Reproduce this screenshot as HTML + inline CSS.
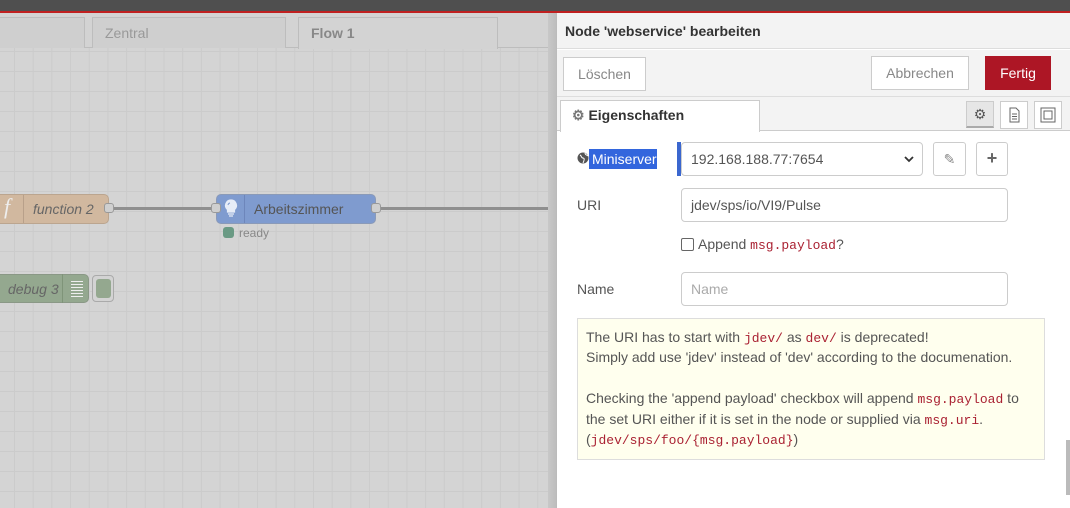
<!DOCTYPE html>
<html><head><meta charset="utf-8"><style>
*{box-sizing:border-box;margin:0;padding:0}
body{width:1070px;height:508px;overflow:hidden;position:relative;font-family:"Liberation Sans",sans-serif;font-size:14px;color:#555;background:#d3d3d3}
.a{position:absolute}
.top{left:0;top:0;width:1070px;height:11px;background:#4f4f4f}
.red{left:0;top:11px;width:1070px;height:2px;background:#c02020}
.canvas{left:0;top:48px;width:548px;height:460px;background-color:#d4d4d4;background-image:linear-gradient(#cbcbcb 1px,transparent 1px),linear-gradient(90deg,#cbcbcb 1px,transparent 1px);background-size:18.7px 20px;background-position:14px 3px}
.tabbar{left:0;top:13px;width:548px;height:35px;background:#d3d3d3;border-bottom:1px solid #bdbdbd}
.tab{top:17px;height:31px;border:1px solid #bdbdbd;border-bottom:none;background:#cfcfcf;font-size:14px;color:#999;padding:7px 12px}
.node{height:30px;border:1px solid #aaa;border-radius:5px}
.port{width:10px;height:10px;border:1px solid #999;background:#cfcfcf;border-radius:3px}
.wire{height:3px;background:#8f8f8f}
.panel{left:556px;top:13px;width:514px;height:495px;background:#fff;border-left:1px solid #bbb}
.shadow{left:548px;top:13px;width:8px;height:495px;background:linear-gradient(90deg,#c8c8c8,#bdbdbd)}
.btn{border:1px solid #ccc;background:#fff;color:#888;font-size:14px;text-align:center}
.inp{border:1px solid #ccc;border-radius:4px;background:#fff;font-size:14px;padding:0 9px;color:#555}
code{font-family:"Liberation Mono",monospace;color:#aa2233;font-size:13px;line-height:1}
</style></head><body>
<div class="a top"></div><div class="a red"></div>
<div class="a tabbar"></div>
<div class="a canvas"></div>
<div class="a tab" style="left:-5px;width:90px"></div>
<div class="a tab" style="left:92px;width:194px">Zentral</div>
<div class="a tab" style="left:298px;width:200px;background:#d3d3d3;color:#888;font-weight:bold;height:32px">Flow 1</div>
<div class="a wire" style="left:112px;top:207px;width:104px"></div>
<div class="a wire" style="left:380px;top:207px;width:168px"></div>
<!-- function node -->
<div class="a node" style="left:-10px;top:194px;width:119px;background:#d1b89f;border-color:#bba58f"></div>
<div class="a" style="left:23px;top:195px;width:1px;height:28px;background:#b8a08a"></div>
<div class="a" style="left:4px;top:194px;font-family:'Liberation Serif',serif;font-style:italic;font-size:22px;color:#eee">f</div>
<div class="a" style="left:33px;top:201px;font-style:italic;color:#666">function 2</div>
<div class="a port" style="left:104px;top:203px"></div>
<!-- Arbeitszimmer -->
<div class="a" style="left:216px;top:194px;width:160px;height:30px;border-radius:5px;background:#7f9bcf;border:1px solid #8a9ab8"></div>
<div class="a" style="left:244px;top:195px;width:1px;height:28px;background:#6d86bb"></div>
<svg class="a" style="left:222px;top:198px" width="18" height="22"><path d="M9 2a5.5 5.5 0 0 0-3.5 9.7V14h7v-2.3A5.5 5.5 0 0 0 9 2z M6 16h6 M7 18h4" fill="#e6ecf7" stroke="#e6ecf7" stroke-width="1.2"/><path d="M8 5a2.5 2.5 0 0 0-2 2" stroke="#7f9bcf" fill="none"/></svg>
<div class="a" style="left:254px;top:201px;color:#555">Arbeitszimmer</div>
<div class="a port" style="left:211px;top:203px"></div>
<div class="a port" style="left:371px;top:203px"></div>
<div class="a" style="left:223px;top:227px;width:11px;height:11px;border-radius:3px;background:#6a9a84"></div>
<div class="a" style="left:239px;top:226px;font-size:12px;color:#888">ready</div>
<!-- debug -->
<div class="a node" style="left:-10px;top:274px;width:99px;height:29px;background:#94a88f;border-color:#8a9886"></div>
<div class="a" style="left:62px;top:274px;width:1px;height:29px;background:#7f9479"></div>
<div class="a" style="left:8px;top:281px;font-style:italic;color:#666">debug 3</div>
<div class="a" style="left:71px;top:281px;width:12px;height:16px;background:repeating-linear-gradient(#eee 0 1px,transparent 1px 3px)"></div>
<div class="a" style="left:92px;top:275px;width:22px;height:27px;border:1px solid #aaa;border-radius:4px;background:#d3d3d3"></div>
<div class="a" style="left:96px;top:279px;width:15px;height:19px;border-radius:3px;background:#94a88f"></div>
<div class="a" style="left:549px;top:440px;width:4px;height:55px;background:#aaa"></div>
<!-- panel -->
<div class="a shadow"></div>
<div class="a panel"></div>
<div class="a" style="left:557px;top:13px;width:513px;height:36px;background:#f3f3f3;border-bottom:1px solid #ddd"></div>
<div class="a" style="left:565px;top:23px;font-weight:bold;color:#333;font-size:14px">Node 'webservice' bearbeiten</div>
<div class="a" style="left:557px;top:50px;width:513px;height:47px;background:#f3f3f3;border-bottom:1px solid #ddd"></div>
<div class="a btn" style="left:563px;top:57px;width:83px;height:34px;line-height:32px">Löschen</div>
<div class="a btn" style="left:871px;top:56px;width:98px;height:34px;line-height:32px">Abbrechen</div>
<div class="a" style="left:985px;top:56px;width:66px;height:34px;background:#ad1625;color:#fff;text-align:center;line-height:34px">Fertig</div>
<div class="a" style="left:557px;top:97px;width:513px;height:34px;background:#f3f3f3;border-bottom:1px solid #ccc"></div>
<div class="a" style="left:560px;top:100px;width:200px;height:32px;background:#fff;border:1px solid #ccc;border-bottom:none"></div>
<div class="a" style="left:572px;top:107px;font-weight:bold;color:#333"><span style="color:#777">&#9881;</span> Eigenschaften</div>
<div class="a" style="left:966px;top:101px;width:28px;height:27px;background:#e6e6e6;border:1px solid #ccc;border-bottom:2px solid #aaa;text-align:center;line-height:25px;color:#555">&#9881;</div>
<div class="a" style="left:1000px;top:101px;width:28px;height:28px;background:#fff;border:1px solid #ccc"><svg width="26" height="26"><path d="M9 6h6l3 3v11H9z M11 12h5 M11 14.5h5 M11 17h5" fill="none" stroke="#666" stroke-width="1"/></svg></div>
<div class="a" style="left:1034px;top:101px;width:28px;height:28px;background:#fff;border:1px solid #ccc"><svg width="26" height="26"><rect x="6" y="6" width="14" height="14" fill="none" stroke="#666"/><rect x="9" y="9" width="8" height="8" fill="none" stroke="#666"/></svg></div>
<!-- form -->
<svg class="a" style="left:577px;top:152px" width="12" height="12"><circle cx="6" cy="6" r="5.5" fill="#555"/><path d="M3 3c2 1 1 3 3 3s1 3 0 5M8 1c0 2 2 2 3 3" stroke="#fff" fill="none" stroke-width="1"/></svg>
<div class="a" style="left:589px;top:149px;width:68px;height:20px;background:#3366dd;color:#fff;font-size:14px;line-height:20px;padding-left:3px">Miniserver</div>
<div class="a" style="left:677px;top:142px;width:4px;height:34px;background:#3b67cf"></div>
<div class="a inp" style="left:681px;top:142px;width:242px;height:34px;line-height:32px">192.168.188.77:7654<svg style="position:absolute;right:8px;top:13px" width="10" height="7"><path d="M1 1l4 4 4-4" stroke="#333" stroke-width="1.8" fill="none"/></svg></div>
<div class="a btn" style="left:933px;top:142px;width:33px;height:34px;line-height:32px;border-radius:3px">&#9998;</div>
<div class="a btn" style="left:976px;top:142px;width:32px;height:34px;line-height:30px;border-radius:3px;font-weight:bold;font-size:18px;color:#666">+</div>
<div class="a" style="left:577px;top:197px">URI</div>
<div class="a inp" style="left:681px;top:188px;width:327px;height:34px;line-height:32px">jdev/sps/io/VI9/Pulse</div>
<div class="a" style="left:681px;top:238px;width:13px;height:13px;border:1px solid #666;border-radius:2px;background:#fff"></div>
<div class="a" style="left:698px;top:236px;font-size:14px">Append <code>msg.payload</code>?</div>
<div class="a" style="left:577px;top:281px">Name</div>
<div class="a inp" style="left:681px;top:272px;width:327px;height:34px;line-height:32px;color:#aaa">Name</div>
<div class="a" style="left:577px;top:318px;width:468px;height:142px;background:#ffffee;border:1px solid #ddd;padding:8px 8px;font-size:14px;line-height:20.4px;color:#555">
The URI has to start with <code>jdev/</code> as <code>dev/</code> is deprecated!<br>
Simply add use 'jdev' instead of 'dev' according to the documenation.<br><br>
Checking the 'append payload' checkbox will append <code>msg.payload</code> to the set URI either if it is set in the node or supplied via <code>msg.uri</code>.<br>(<code>jdev/sps/foo/{msg.payload}</code>)
</div>
<div class="a" style="left:1066px;top:440px;width:4px;height:55px;background:#bbb"></div>
</body></html>
